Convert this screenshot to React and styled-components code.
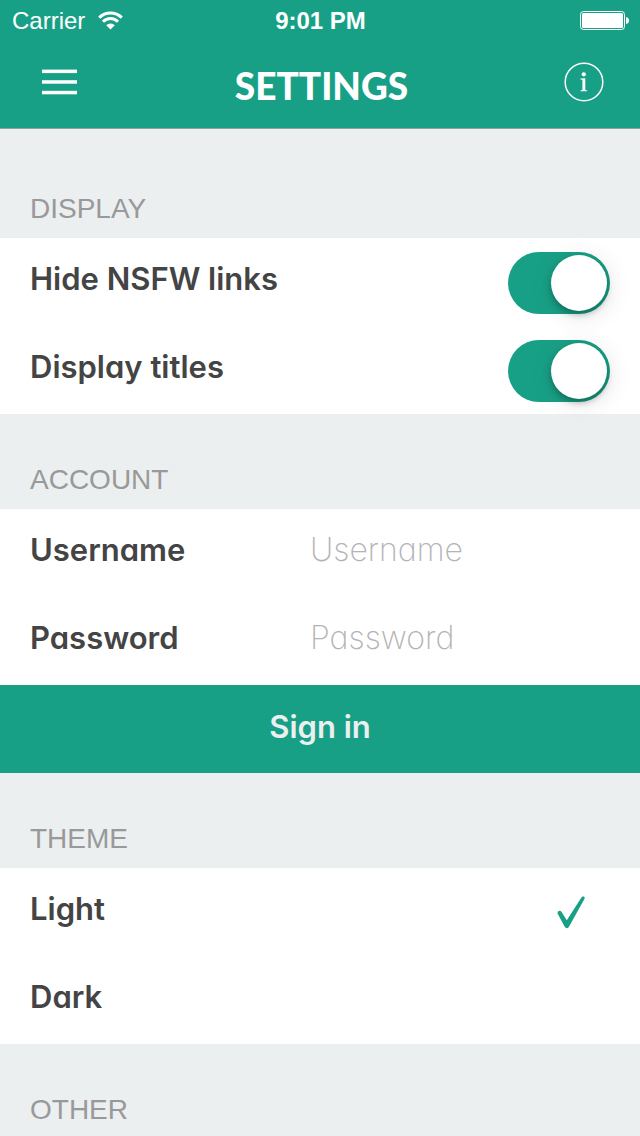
import React from "react";
import styled, { createGlobalStyle, css } from "styled-components";

const GREEN = "#18a086";
const PAPER = "#ebeff0";

const GlobalStyle = createGlobalStyle`
  * { box-sizing: border-box; }
  body { margin: 0; background: ${PAPER}; }
`;

const rounded = css`
  font-family: Inter, "Open Sans", sans-serif;
  font-feature-settings: "cv11", "ss03";
`;

const Screen = styled.div`
  display: flex;
  flex-direction: column;
  height: 100vh;
  background: ${PAPER};
  color: #444;
`;

const Header = styled.header`
  flex: none;
  background: ${GREEN};
  border-bottom: 1px solid #8f9f9c;
  color: #fff;
`;

const StatusBar = styled.div`
  display: grid;
  grid-template-columns: 1fr auto 1fr;
  align-items: center;
  height: 41px;
  padding: 0 11px 0 12px;
  font: 24px "Liberation Sans", Arial, sans-serif;
`;

const Carrier = styled.div`
  display: flex;
  align-items: center;
  gap: 13px;
`;

const Clock = styled.time`
  font-weight: 700;
`;

const Battery = styled.svg`
  justify-self: end;
`;

const NavBar = styled.nav`
  display: flex;
  justify-content: space-between;
  height: 87px;
  padding: 0 26px 0 29px;
`;

const IconButton = styled.button`
  display: grid;
  place-items: center;
  width: 60px;
  height: 82px;
  padding: 0;
  border: 0;
  background: none;
  color: inherit;
  cursor: pointer;
`;

const Title = styled.h1`
  margin: 0;
  font-family: Lato, sans-serif;
  font-size: 37px;
  font-weight: 900;
  line-height: 90px;
`;

const Content = styled.main`
  flex: 1;
  min-height: 0;
  overflow-y: auto;
  padding-top: 14px;
  scrollbar-width: none;
`;

const SectionTitle = styled.h2`
  margin: 0;
  padding: 50px 30px 13px;
  color: #999;
  font: 28px/32px "Liberation Sans", Arial, sans-serif;
`;

const Row = styled.label`
  display: flex;
  align-items: center;
  justify-content: ${(p) => (p.$split ? "space-between" : "flex-start")};
  height: 88px;
  padding: 2px ${(p) => p.$end || 30}px 0 30px;
  background: #fff;
`;

const RowText = styled.span`
  ${rounded}
  flex: none;
  width: ${(p) => (p.$column ? "280px" : "auto")};
  padding-bottom: 8px;
  font-size: 31px;
  font-weight: 600;
  line-height: 40px;
`;

const Switch = styled.input`
  appearance: none;
  width: 102px;
  height: 62px;
  margin: 0;
  padding: 3px;
  border-radius: 31px;
  background: #d5dada;
  cursor: pointer;

  &::before {
    content: "";
    display: block;
    width: 56px;
    height: 56px;
    border-radius: 50%;
    background: #fff;
    box-shadow: 0 4px 6px rgba(0, 0, 0, 0.24), 2px 4px 24px rgba(0, 0, 0, 0.12);
  }

  &:checked {
    background: ${GREEN};
  }

  &:checked::before {
    margin-left: 40px;
  }
`;

const TextInput = styled.input`
  ${rounded}
  flex: 1;
  min-width: 0;
  height: 50px;
  padding: 0 0 10px;
  border: 0;
  outline: 0;
  background: none;
  color: #444;
  font-size: 32px;
  font-weight: 200;

  &::placeholder {
    color: #b4b4b4;
    opacity: 1;
  }
`;

const SignInButton = styled.button`
  ${rounded}
  display: block;
  width: 100%;
  height: 88px;
  padding: 0 0 6px;
  border: 0;
  background: ${GREEN};
  color: ${PAPER};
  font-size: 31px;
  font-weight: 600;
  cursor: pointer;
`;

const HiddenRadio = styled.input`
  appearance: none;
  width: 0;
  height: 0;
  margin: 0;
`;

const Check = styled.svg`
  display: none;

  ${HiddenRadio}:checked ~ & {
    display: block;
    margin-left: auto;
  }
`;

const WifiIcon = () => (
  <svg width="25" height="19" viewBox="0 0 25 19" fill="none" stroke="#fff" strokeWidth="3" aria-hidden="true">
    <path d="M1.2 6.6 A16 16 0 0 1 23.8 6.6" />
    <path d="M5 10.7 A10.6 10.6 0 0 1 20 10.7" />
    <path d="M8.2 14.3 A6.1 6.1 0 0 1 16.8 14.3 L12.5 18.6 Z" fill="#fff" stroke="none" />
  </svg>
);

const BatteryIcon = () => (
  <Battery width="49" height="19" viewBox="0 0 49 19" aria-hidden="true">
    <rect x="0.5" y="0.5" width="44" height="18" rx="3" fill="none" stroke="#fff" />
    <rect x="2" y="2" width="41" height="15" rx="1.5" fill="#fff" />
    <path d="M46 6 Q49 6.5 49 9.5 Q49 12.5 46 13 Z" fill="#fff" />
  </Battery>
);

const MenuIcon = () => (
  <svg width="35" height="26" viewBox="0 0 35 26" fill="#fff" aria-hidden="true">
    <rect y="0.6" width="35" height="3.5" />
    <rect y="11.2" width="35" height="3.5" />
    <rect y="21.8" width="35" height="3.5" />
  </svg>
);

const InfoIcon = () => (
  <svg width="40" height="40" viewBox="0 0 40 40" aria-hidden="true">
    <circle cx="20" cy="20" r="18.8" fill="none" stroke="#fff" strokeWidth="1.5" />
    <circle cx="19.8" cy="12.3" r="2.1" fill="#fff" />
    <path d="M16.5 16.6 L21.3 16.2 V28 L23.2 28.4 V29.3 H16.5 V28.4 L18.4 28 V17.8 L16.5 17.5 Z" fill="#fff" />
  </svg>
);

const CheckIcon = () => (
  <Check width="28" height="34" viewBox="0 0 28 34" fill={GREEN} aria-hidden="true">
    <path d="M0.6 17.6 Q0.3 15.8 1.8 15 Q3.5 14.4 4.6 16 L9.8 24.2 L24.4 1.4 Q25.4 0 26.8 0.6 Q28.2 1.4 27.4 3 L12.4 30 Q11.2 32.2 10 32.2 Q8.6 32.2 7.4 30.2 Z" />
  </Check>
);

const SwitchRow = ({ label }) => (
  <Row $split>
    <RowText>{label}</RowText>
    <Switch type="checkbox" role="switch" defaultChecked />
  </Row>
);

const FieldRow = ({ label, type }) => (
  <Row>
    <RowText $column>{label}</RowText>
    <TextInput type={type} placeholder={label} />
  </Row>
);

const ThemeRow = ({ label, checked }) => (
  <Row $end={55}>
    <HiddenRadio type="radio" name="theme" defaultChecked={checked} />
    <RowText>{label}</RowText>
    <CheckIcon />
  </Row>
);

export default function App() {
  return (
    <Screen>
      <GlobalStyle />
      <Header>
        <StatusBar>
          <Carrier>
            Carrier
            <WifiIcon />
          </Carrier>
          <Clock>9:01 PM</Clock>
          <BatteryIcon />
        </StatusBar>
        <NavBar>
          <IconButton aria-label="Menu">
            <MenuIcon />
          </IconButton>
          <Title>SETTINGS</Title>
          <IconButton aria-label="About">
            <InfoIcon />
          </IconButton>
        </NavBar>
      </Header>
      <Content>
        <SectionTitle>DISPLAY</SectionTitle>
        <SwitchRow label="Hide NSFW links" />
        <SwitchRow label="Display titles" />
        <SectionTitle>ACCOUNT</SectionTitle>
        <FieldRow label="Username" type="text" />
        <FieldRow label="Password" type="password" />
        <SignInButton>Sign in</SignInButton>
        <SectionTitle>THEME</SectionTitle>
        <ThemeRow label="Light" checked />
        <ThemeRow label="Dark" />
        <SectionTitle>OTHER</SectionTitle>
      </Content>
    </Screen>
  );
}
